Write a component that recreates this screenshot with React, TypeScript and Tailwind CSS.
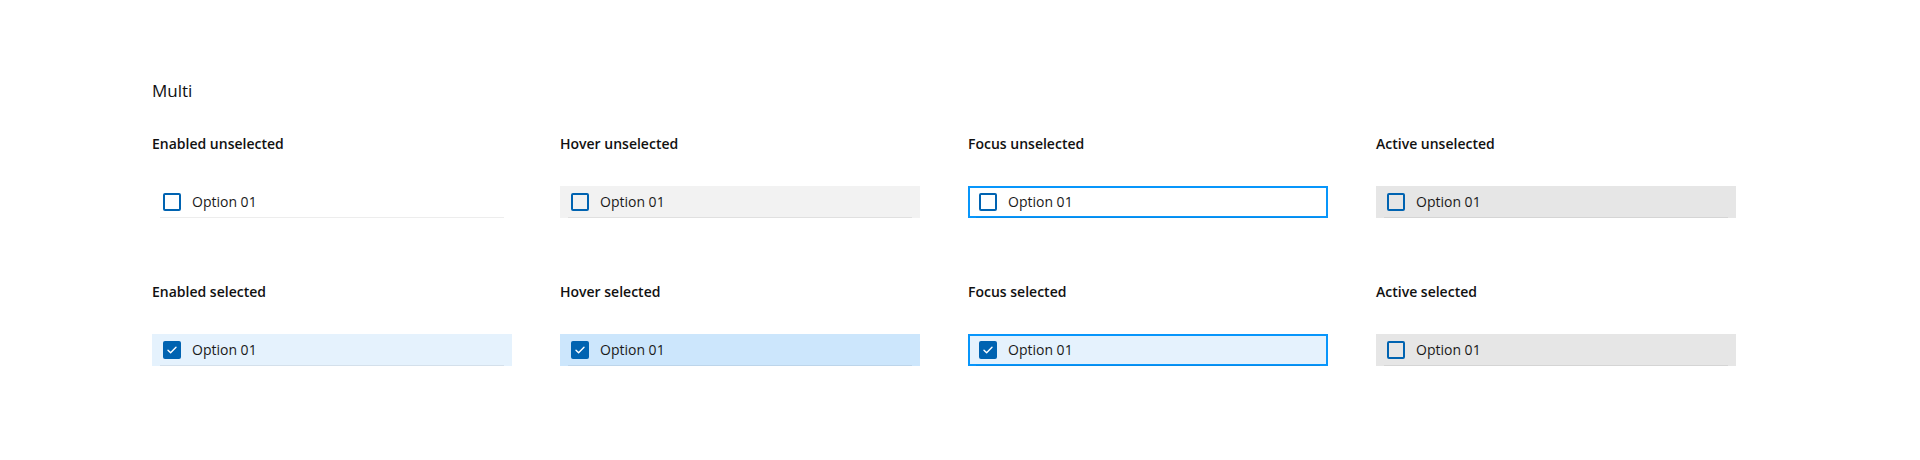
import React from 'react';

type Variant = 'enabled' | 'hover' | 'focus' | 'active';

interface OptionRowProps {
  variant: Variant;
  checked: boolean;
}

// background per state; selected rows get the blue tints
function rowClass(variant: Variant, checked: boolean): string {
  if (variant === 'active') return 'bg-[#e6e6e6]';
  if (variant === 'hover') return checked ? 'bg-[#cce6fc]' : 'bg-[#f2f2f2]';
  if (variant === 'focus')
    return checked
      ? 'bg-[#e5f2fd] shadow-[inset_0_0_0_2px_#0896fb]'
      : 'bg-white shadow-[inset_0_0_0_2px_#0896fb]';
  return checked ? 'bg-[#e5f2fd]' : 'bg-white';
}

function Checkbox({ checked }: { checked: boolean }) {
  if (checked) {
    return (
      <span className="flex h-[18px] w-[18px] shrink-0 items-center justify-center rounded-[2px] bg-[#0063b1]">
        <svg width="12" height="12" viewBox="0 0 12 12" fill="none">
          <path d="M2 6.3 4.6 8.8 10 3.3" stroke="white" strokeWidth="1.4" strokeLinecap="round" strokeLinejoin="round" />
        </svg>
      </span>
    );
  }
  return <span className="h-[18px] w-[18px] shrink-0 rounded-[2px] border-2 border-[#0063b1] bg-transparent" />;
}

function OptionRow({ variant, checked }: OptionRowProps) {
  return (
    <div className={`relative flex h-8 w-[360px] items-center gap-[11px] pl-[11px] ${rowClass(variant, checked)}`}>
      <Checkbox checked={checked} />
      <span className="text-[14px] leading-5 text-[#1a1a1a]">Option 01</span>
      <span className="absolute bottom-0 left-2 right-2 h-px bg-black/[0.07]" />
    </div>
  );
}

const cells: { label: string; variant: Variant; checked: boolean }[] = [
  { label: 'Enabled unselected', variant: 'enabled', checked: false },
  { label: 'Hover unselected', variant: 'hover', checked: false },
  { label: 'Focus unselected', variant: 'focus', checked: false },
  { label: 'Active unselected', variant: 'active', checked: false },
  { label: 'Enabled selected', variant: 'enabled', checked: true },
  { label: 'Hover selected', variant: 'hover', checked: true },
  { label: 'Focus selected', variant: 'focus', checked: true },
  { label: 'Active selected', variant: 'active', checked: false },
];

export default function App() {
  return (
    <div
      className="h-[460px] w-[1920px] bg-white pl-[152px] pt-[79px] text-[#111]"
      style={{ fontFamily: '"Open Sans", "Noto Sans", sans-serif' }}
    >
      <h2 className="text-[17px] leading-6 font-medium">Multi</h2>
      <div className="mt-[31px] grid grid-cols-[repeat(4,360px)] gap-x-12 gap-y-[64px]">
        {cells.map((c) => (
          <div key={c.label} className="flex flex-col">
            <div className="text-[14px] leading-5 font-semibold">{c.label}</div>
            <div className="mt-[32px]">
              <OptionRow variant={c.variant} checked={c.checked} />
            </div>
          </div>
        ))}
      </div>
    </div>
  );
}
